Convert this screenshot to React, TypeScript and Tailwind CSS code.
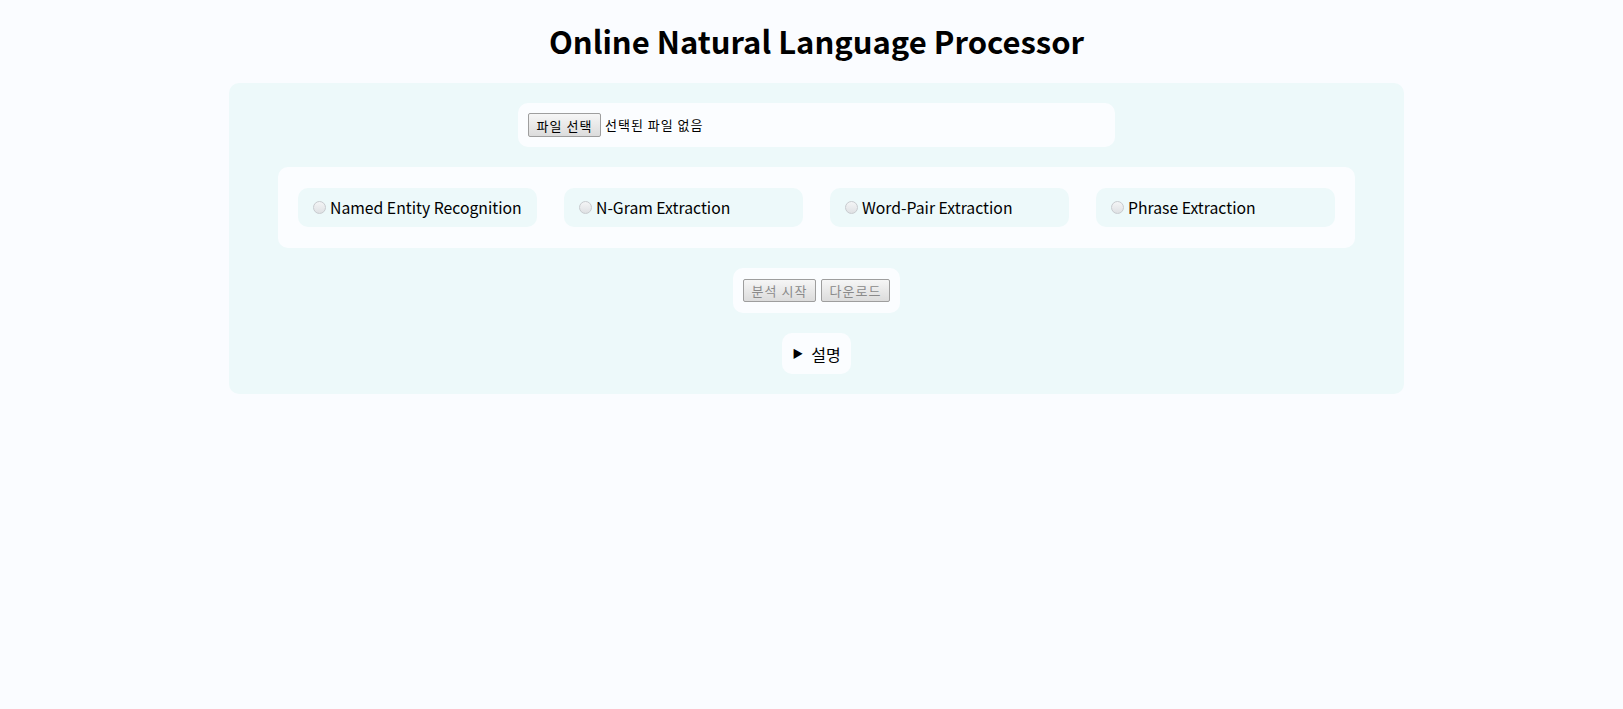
import React from "react";

const font = { fontFamily: '"Noto Sans CJK KR", "Noto Sans", sans-serif' };

const tasks = [
  "Named Entity Recognition",
  "N-Gram Extraction",
  "Word-Pair Extraction",
  "Phrase Extraction",
];

const Radio = () => (
  <span className="inline-block w-[13px] h-[13px] rounded-full border border-[#c8cbcf] bg-gradient-to-b from-[#f4f5f6] to-[#dfe1e4] shrink-0" />
);

const OldButton = ({ children, disabled, w }: { children: React.ReactNode; disabled?: boolean; w: string }) => (
  <button
    className={`${disabled ? "text-[#8a8a8a] h-[23px]" : "text-black h-[24px]"} ${w} border border-[#9e9e9e] bg-gradient-to-b from-[#f6f6f6] to-[#dcdcdc] text-[13px] tracking-[1px] leading-none rounded-[2px] px-0`}
  >
    {children}
  </button>
);

export default function App() {
  return (
    <div className="min-h-screen w-full bg-[#fafcff] text-black pl-[10px]" style={font}>
      <div className="flex flex-col items-center">
        <h1 className="mt-[16px] h-[50px] text-[31px] font-bold leading-[50px]">
          Online Natural Language Processor
        </h1>
        <div className="mt-[17px] w-[1175px] rounded-[10px] bg-[#edf9fa] p-5 flex flex-col items-center gap-5">
          <div className="w-[597px] h-[44px] rounded-[10px] bg-[#fbfdff] flex items-center px-[10px]">
            <OldButton w="w-[73px]">파일 선택</OldButton>
            <span className="ml-[4px] text-[13px] tracking-[1px]">선택된 파일 없음</span>
          </div>
          <div className="w-[1077px] h-[81px] rounded-[10px] bg-[#fbfdff] grid grid-cols-4 gap-[27px] px-5 items-center">
            {tasks.map((t) => (
              <label
                key={t}
                className="h-[39px] rounded-[10px] bg-[#edf9fa] flex items-center pl-[15px] gap-[4px] text-[15.75px]"
              >
                <Radio />
                <span>{t}</span>
              </label>
            ))}
          </div>
          <div className="h-[45px] rounded-[10px] bg-[#fbfdff] flex items-center gap-[5px] px-[10px]">
            <OldButton disabled w="w-[73px]">분석 시작</OldButton>
            <OldButton disabled w="w-[69px]">다운로드</OldButton>
          </div>
          <div className="w-[69px] h-[41px] rounded-[10px] bg-[#fbfdff] flex items-center justify-center gap-[8px] text-[16px]">
            <span className="text-[11px]">▶</span>
            <span>설명</span>
          </div>
        </div>
      </div>
    </div>
  );
}
